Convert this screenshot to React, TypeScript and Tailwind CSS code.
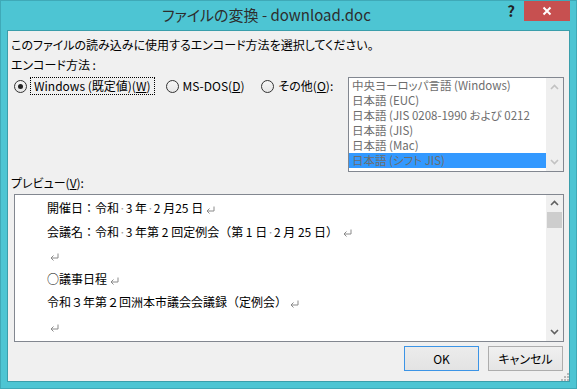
import React from "react";

const Up = ({ color }: { color: string }) => (
  <svg width="9" height="6" viewBox="0 0 9 6">
    <polyline points="1,5 4.5,1.5 8,5" fill="none" stroke={color} strokeWidth="1.6" />
  </svg>
);
const Down = ({ color }: { color: string }) => (
  <svg width="9" height="6" viewBox="0 0 9 6">
    <polyline points="1,1 4.5,4.5 8,1" fill="none" stroke={color} strokeWidth="1.6" />
  </svg>
);

const Radio = ({ checked }: { checked?: boolean }) => (
  <span className="flex h-[13px] w-[13px] shrink-0 items-center justify-center rounded-full border border-[#333] bg-gradient-to-b from-[#f6f6f6] to-[#e6e6e6]">
    {checked && <span className="h-[5px] w-[5px] rounded-full bg-[#222]" />}
  </span>
);

const Dot = () => <span className="text-[#9a9a9a]">·</span>;
const Ret = () => (
  <span className="inline-flex w-[14px] items-center justify-center align-middle">
    <svg width="9" height="8" viewBox="0 0 9 8">
      <path d="M8 0.5 V5 H1.5" fill="none" stroke="#8a8a8a" strokeWidth="1" />
      <path d="M1 5 L3.5 2.5 M1 5 L3.5 7.5" fill="none" stroke="#8a8a8a" strokeWidth="1" />
    </svg>
  </span>
);

export default function App() {
  const items = [
    "中央ヨーロッパ言語 (Windows)",
    "日本語 (EUC)",
    "日本語 (JIS 0208-1990 および 0212",
    "日本語 (JIS)",
    "日本語 (Mac)",
    "日本語 (シフト JIS)",
  ];
  const ui = "font-['Noto_Sans_CJK_JP',sans-serif] [font-feature-settings:'palt']";
  return (
    <div className={`flex h-[389px] w-[577px] flex-col overflow-hidden border border-[#3fa9b7] bg-[#4dc5d3] ${ui}`}>
      {/* title bar */}
      <div className="flex h-[29px] shrink-0 items-start">
        <div className="flex h-[29px] flex-1 items-center justify-center pl-[34px] text-[15px] text-[#2d2d2d]">
          ファイルの変換 - download.doc
        </div>
        <div className="flex h-[20px] w-[26px] items-center justify-center text-[15px] font-bold text-[#222]">?</div>
        <div className="mr-[6px] flex h-[20px] w-[46px] items-center justify-center bg-[#c75050]">
          <svg width="10" height="10" viewBox="0 0 10 10">
            <path d="M1.5 1.5 L8.5 8.5 M8.5 1.5 L1.5 8.5" stroke="#fff" strokeWidth="2" />
          </svg>
        </div>
      </div>

      {/* client */}
      <div className="mx-[6px] flex h-[352px] flex-col border border-[#3a9eab] bg-[#f0f0f0] text-[12px] text-black">
        <div className="ml-[3px] mt-[6px] h-[16px] leading-[16px]">
          このファイルの読み込みに使用するエンコード方法を選択してください。
        </div>
        <div className="ml-[3px] mt-[4px] h-[16px] leading-[16px]">エンコード方法 :</div>

        <div className="mt-[4px] flex items-start">
          <div className="ml-[6px] flex h-[18px] items-center">
            <Radio checked />
            <span className="ml-[3px] flex h-[18px] items-center border border-dotted border-black px-[3px] leading-[16px]">
              Windows (既定値)(<u>W</u>)
            </span>
            <span className="ml-[11px]">
              <Radio />
            </span>
            <span className="ml-[4px] leading-[16px]">
              MS-DOS(<u>D</u>)
            </span>
            <span className="ml-[17px]">
              <Radio />
            </span>
            <span className="ml-[4px] leading-[16px]">
              その他(<u>O</u>):
            </span>
          </div>
          <div className="ml-auto mr-[5px] flex h-[95px] w-[216px] border border-[#828790] bg-white">
            <div className="flex-1 overflow-hidden text-[11.5px] text-[#6d6d6d]">
              {items.map((t, i) => (
                <div
                  key={t}
                  className={`h-[15px] overflow-hidden whitespace-nowrap pl-[3px] leading-[15px] ${i === 5 ? "bg-[#3399ff]" : ""}`}
                >
                  {t}
                </div>
              ))}
            </div>
            <div className="flex w-[17px] flex-col items-center justify-between bg-[#efefef] py-[6px]">
              <Up color="#c2c2c2" />
              <Down color="#c2c2c2" />
            </div>
          </div>
        </div>

        <div className="ml-[3px] mt-[3px] h-[16px] leading-[16px]">
          プレビュー(<u>V</u>):
        </div>

        <div className="ml-[6px] mr-[5px] mt-[3px] flex h-[149px] border border-[#828790] bg-white">
          <div className="flex-1 overflow-hidden whitespace-nowrap pl-[32px] pt-[1px] font-['Noto_Sans_CJK_JP',sans-serif] text-[12px] leading-[23.6px] [font-feature-settings:normal]">
            <div>
              開催日：令和<Dot />3 年<Dot />2 月25 日<Ret />
            </div>
            <div>
              会議名：令和<Dot />3 年第 2 回定例会（第 1 日<Dot />2 月 25 日） <Ret />
            </div>
            <div>
              <Ret />
            </div>
            <div>
              ○議事日程<Ret />
            </div>
            <div>
              令和３年第２回洲本市議会会議録（定例会）<Ret />
            </div>
            <div>
              <Ret />
            </div>
          </div>
          <div className="flex w-[17px] flex-col items-center bg-[#f0f0f0]">
            <div className="mt-[5px]">
              <Up color="#606060" />
            </div>
            <div className="mt-[6px] h-[16px] w-[15px] bg-[#cdcdcd]" />
            <div className="mb-[6px] mt-auto">
              <Down color="#606060" />
            </div>
          </div>
        </div>

        <div className="mr-[6px] mt-[4px] flex justify-end gap-[9px]">
          <div className="flex h-[25px] w-[75px] items-center justify-center border border-[#3c94e6] bg-gradient-to-b from-[#ececec] to-[#e3e3e3]">
            OK
          </div>
          <div className="flex h-[25px] w-[75px] items-center justify-center border border-[#adadad] bg-gradient-to-b from-[#f0f0f0] to-[#e5e5e5]">
            キャンセル
          </div>
        </div>

        <div className="mt-auto flex justify-end">
          <svg width="10" height="10" viewBox="0 0 10 10">
            {[
              [8, 2],
              [8, 5],
              [5, 5],
              [8, 8],
              [5, 8],
              [2, 8],
            ].map(([x, y]) => (
              <rect key={`${x}-${y}`} x={x} y={y} width="2" height="2" fill="#b8b8b8" />
            ))}
          </svg>
        </div>
      </div>
    </div>
  );
}
